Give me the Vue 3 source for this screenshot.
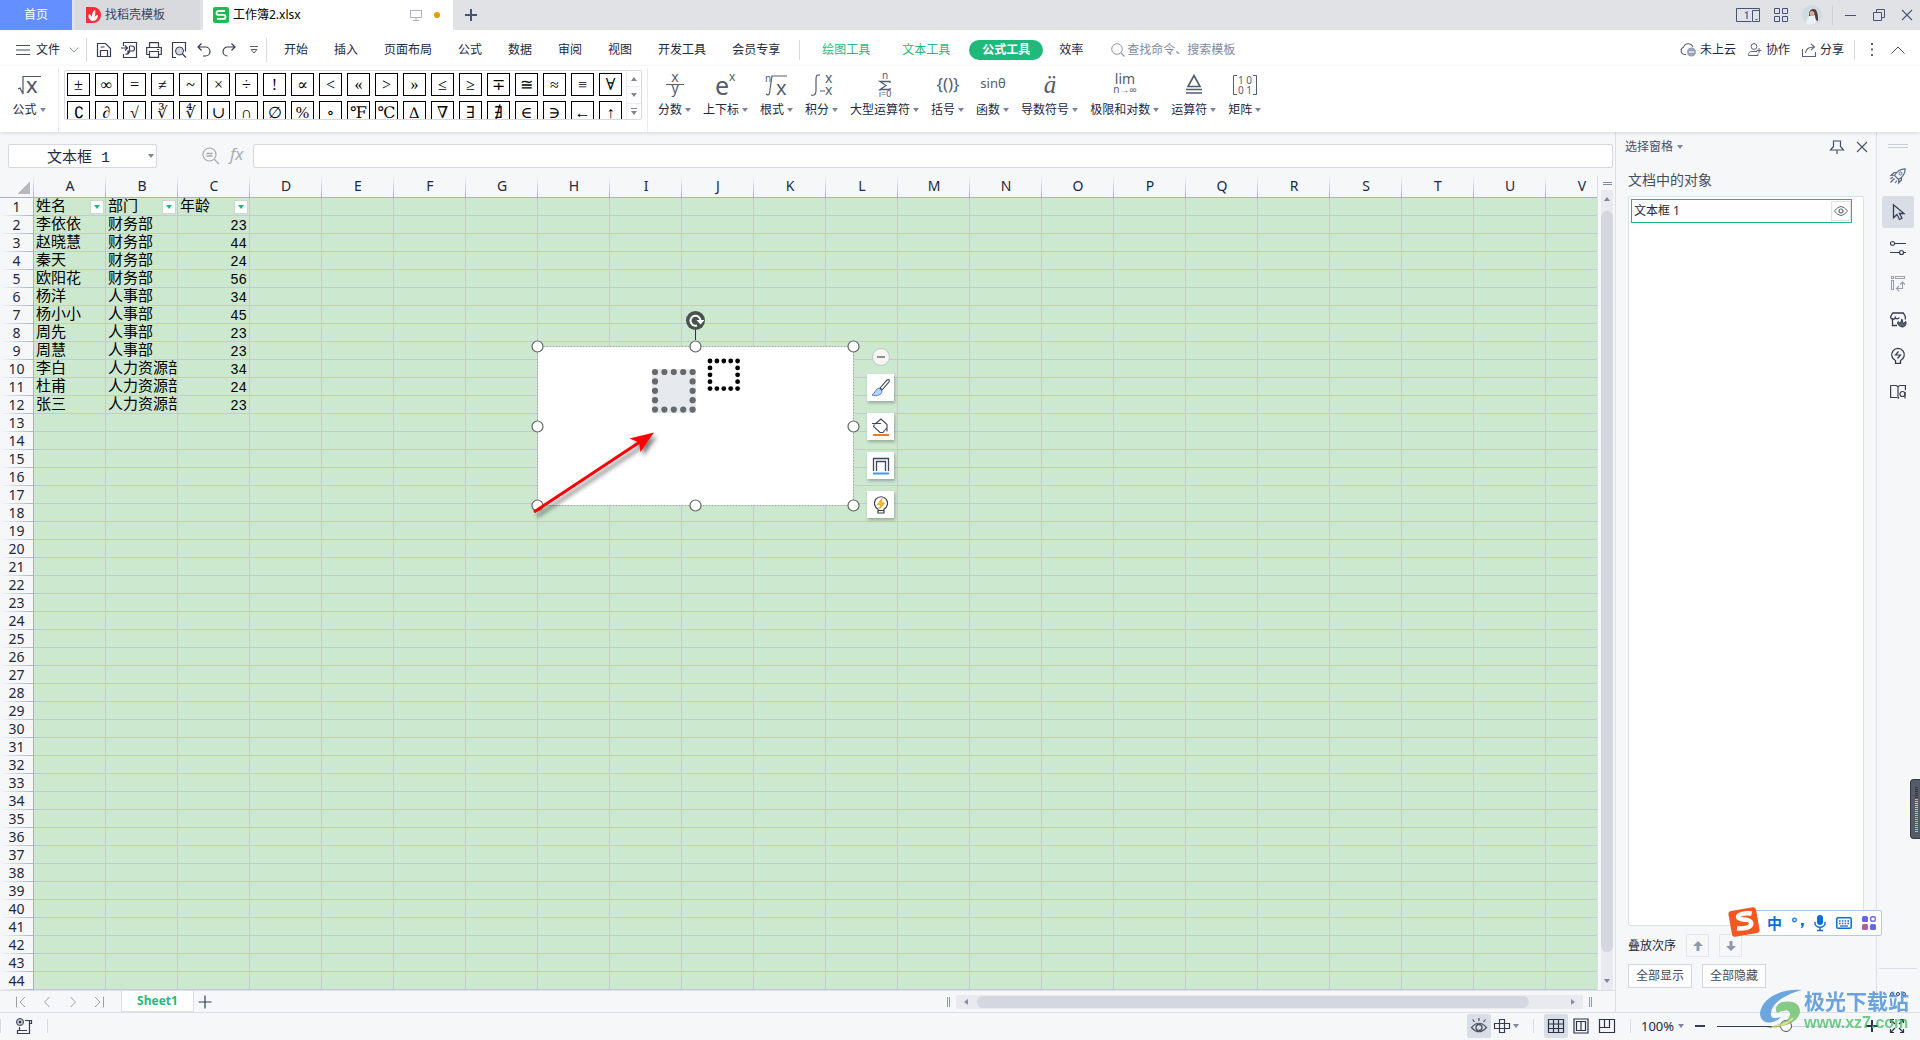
<script setup>
import { h, ref } from 'vue'

const icons = {
  docer: [16, 16, '<path d="M1 0h7a8 8 0 0 1 0 16H1z" fill="#fb2b3a"/><path d="M7 14C3 12 3 9 4 7c2 1 3 2 3 4 0-3 0-6 3-8 1 3 0 6-1 8 1-2 2-3 4-3 0 3-2 6-5 6z" fill="#fff"/>'],
  sheet: [16, 16, '<rect width="16" height="16" rx="2" fill="#1fba56"/><path d="M12 4H5.500a1.800 1.800 0 0 0 0 3.900h5a1.900 1.900 0 0 1 0 4H4" fill="none" stroke="#fff" stroke-width="1.800"/>'],
  monitor: [12, 12, '<path d="M.5 1.500h11v7H.5zM6 8.500v2.500M3 11.500h6" fill="none" stroke="#a9b0c6"/>'],
  plus: [12, 12, '<path d="M6 0v12M0 6h12" stroke="currentColor" stroke-width="2"/>'],
  device: [24, 14, '<path d="M15.500 13.500H.5V.5h23v2M16.500 2.500h7v11h-7zM19.500 11.500h2" fill="none" stroke="#465377"/><path d="M9 5l2-1v7" fill="none" stroke="#6b5f8a" stroke-width="1.300"/>'],
  apps: [14, 14, '<path d="M.5.5h5v5h-5zM8.500.5h5v5h-5zM.5 8.500h5v5h-5zM8.500 8.500h5v5h-5z" fill="none" stroke="#465377"/>'],
  avatar: [20, 20, '<circle cx="10" cy="10" r="10" fill="#cfdbe0"/><path d="M4 19c0-5 2-8 6-9l4 1 0 7c-3 2-7 2-10 1z" fill="#e8f1f4"/><path d="M7 8c1-4 5-5 7-3 2 3 2 7 2 11-2 0-3-3-3-6L7 11z" fill="#4a3a40"/><circle cx="10" cy="8.500" r="2.500" fill="#d9a79b"/>'],
  minimize: [12, 12, '<path d="M0 6.500h11" stroke="#465377"/>'],
  restore: [12, 12, '<path d="M.5 3.500h8v8h-8zM3.500 3.500v-3h8v8h-3" fill="none" stroke="#465377"/>'],
  close: [12, 12, '<path d="M1 1l10 10M11 1L1 11" stroke="currentColor" stroke-width="1.100"/>'],
  burger: [14, 12, '<path d="M0 1.500h14M0 6h14M0 10.500h14" stroke="#4a4f60"/>'],
  chevDown: [10, 6, '<path d="M.5.5L5 5 9.500.5" fill="none" stroke="#9a9fac"/>'],
  chevUp: [14, 8, '<path d="M.5 7.500L7 1l6.500 6.500" fill="none" stroke="#4a4f60"/>'],
  save: [16, 16, '<path d="M1.500 14.500v-13h8l5 5v8h-13zM4.500 14V8.500h7V14M4.500 5h4" fill="none" stroke="#363c52" stroke-width="1.200"/>'],
  pdf: [16, 16, '<path d="M2.500 4V.5h13v15h-13V12M0 6h6M4 3.500L6.500 6 4 8.500M8.500 4h2.500a2.500 2.500 0 0 1 0 5h-4v3.500M8.500 4v5a3 3 0 0 1-4 3" fill="none" stroke="#363c52" stroke-width="1.200"/>'],
  print: [16, 16, '<path d="M3.500 5V.7h9V5M3 12.500H.7V5.500h14.600v7H13M3.500 9.500h9v5.800h-9zM11 7.500h2" fill="none" stroke="#363c52" stroke-width="1.200"/>'],
  preview: [16, 16, '<path d="M5 15.500H1.500V.5h13v9" fill="none" stroke="#363c52" stroke-width="1.200"/><circle cx="8.500" cy="9" r="4" fill="#d5d8df" stroke="#363c52"/><path d="M11.500 12l3.500 3.500" stroke="#363c52" stroke-width="1.200"/>'],
  undo: [14, 14, '<path d="M4.500.5L1 4l3.500 3.500M1 4h7.500a4.500 4.500 0 0 1 0 9H6" fill="none" stroke="#363c52" stroke-width="1.200"/>'],
  redo: [14, 14, '<path d="M9.500.5L13 4 9.500 7.500M13 4H5.500a4.500 4.500 0 0 0 0 9" fill="none" stroke="#363c52" stroke-width="1.200"/>'],
  more: [8, 8, '<path d="M0 .5h8M1 3.500L4 7l3-3.500z" fill="none" stroke="#5a6174"/>'],
  search: [14, 14, '<circle cx="6" cy="6" r="5.300" fill="none" stroke="#8d95ad"/><path d="M10 10l3.500 3.500" stroke="#8d95ad" stroke-width="1.200"/>'],
  cloud: [16, 15, '<path d="M6 12.500H4.500a3.800 3.800 0 0 1-1-7.300 5 5 0 0 1 9.500 0" fill="none" stroke="#5c6378" stroke-width="1.100"/><circle cx="11.500" cy="10" r="4.500" fill="#98a1b6"/><path d="M9 10h5" stroke="#fff" stroke-width="1.200"/>'],
  collab: [14, 14, '<circle cx="6" cy="3.500" r="2.900" fill="none" stroke="#5c6378"/><path d="M9 8.500H4a3 3 0 0 0-3.500 3v1h9.500v-2M8.500 7.500h5M11 5v5" fill="none" stroke="#5c6378"/>'],
  share: [14, 14, '<path d="M.5 6v7.500h13V9M3.500 10c.5-4 3-6 8-6M9 .8L12.500 4 9 7.200" fill="none" stroke="#5c6378" stroke-width="1.100"/>'],
  dots: [2, 14, '<path d="M0 1h2M0 6.500h2M0 12h2" stroke="#5c6378" stroke-width="2"/>'],
  root: [24, 20, '<path d="M1 14l2-1 3 6V1.500h18" fill="none" stroke="#4d5467" stroke-width="1.200"/><text x="9" y="18" font-size="22" fill="#4d5467" font-family="Noto Sans">x</text>'],
  frac: [24, 24, '<text x="12" y="9" text-anchor="middle" font-size="14">x</text><text x="12" y="20" text-anchor="middle" font-size="14">y</text><path d="M3 11.500h18" stroke="#535c70"/>'],
  sup: [24, 24, '<text x="1" y="22" font-size="25">e</text><text x="15" y="8" font-size="12">x</text>'],
  nroot: [24, 24, '<text x="0" y="9" font-size="10">n</text><path d="M1 21c3 2 4 0 4-5L7 3h15" fill="none" stroke="#535c70" stroke-width="1.200"/><text x="11" y="22" font-size="20">x</text>'],
  integral: [24, 24, '<path d="M10 2c-4-1-4 2-4 5v10c0 4-1 6-5 5M10 18h5" fill="none" stroke="#535c70" stroke-width="1.200"/><text x="15" y="10" font-size="14">x</text><text x="15" y="22" font-size="14">x</text>'],
  sum: [24, 24, '<text x="12" y="6" font-size="10" text-anchor="middle">n</text><path d="M17 10V8.500H7l6 4-6 4h10V15" fill="none" stroke="#535c70" stroke-width="1.300"/><text x="12" y="24" font-size="9" text-anchor="middle">i=0</text>'],
  brackets: [26, 24, '<text x="13" y="17" font-size="17" text-anchor="middle">{()}</text>'],
  func: [26, 24, '<text x="13" y="15" font-size="13" text-anchor="middle">sinθ</text>'],
  deriv: [24, 24, '<text x="12" y="20" font-size="25" font-style="italic" text-anchor="middle" style="font-family:Liberation Serif">ä</text>'],
  limit: [26, 24, '<text x="13" y="11" font-size="14" text-anchor="middle">lim</text><text x="13" y="20" font-size="10" text-anchor="middle">n→∞</text>'],
  operator: [24, 24, '<path d="M12 2.500l6 11H6zM4 16.500h16M4 20h16" fill="none" stroke="#535c70" stroke-width="1.600"/>'],
  matrix: [24, 24, '<path d="M4 2.500H.5v19H4M20 2.500h3.500v19H20" fill="none" stroke="#535c70"/><text x="12" y="11" font-size="10" text-anchor="middle">1 0</text><text x="12" y="21" font-size="10" text-anchor="middle">0 1</text>'],
  zoomOut: [18, 18, '<circle cx="7.500" cy="7.500" r="6.500" fill="none" stroke="#a9a9ae" stroke-width="1.200"/><path d="M4.500 6.500h6M4.500 9h6M12.500 12.500L17 17" stroke="#a9a9ae" stroke-width="1.300"/>'],
  fx: [18, 18, '<text x="2" y="13" font-size="17" font-style="italic" fill="#a9a9ae" font-family="Open Sans">fx</text>'],
  pin: [14, 14, '<path d="M3.500 1h7v5.500l3 3.500H.5l3-3.500zM7 10v4" fill="none" stroke="#454f6b" stroke-width="1.200"/>'],
  eye: [14, 10, '<path d="M.5 5Q7-4 13.500 5 7 14 .5 5z" fill="none" stroke="#63666d"/><circle cx="7" cy="5" r="2" fill="none" stroke="#63666d" stroke-width="1.200"/>'],
  rocket: [16, 16, '<path d="M4.500 7.500C7 3 10 .8 15.200.8 15.200 6 13 9 8.500 11.500zM5 7L1 7.500 4 4.500h3M9 11l-.5 4 3-3V9M4.500 10.500l-4 4M3 9L.5 11M7 12.500L5 15" fill="none" stroke="#5b6885" stroke-width="1.200"/><circle cx="10.500" cy="5.500" r="1.500" fill="none" stroke="#5b6885"/>'],
  pointer: [16, 16, '<path d="M3.500.8v13l3.500-3.300 2.500 5 2.500-1.200-2.500-4.800H14z" fill="none" stroke="#363c52" stroke-width="1.300"/>'],
  sliders: [16, 16, '<circle cx="2.500" cy="3.500" r="2" fill="none" stroke="#363c52" stroke-width="1.200"/><circle cx="11.500" cy="12.500" r="2" fill="none" stroke="#363c52" stroke-width="1.200"/><path d="M5 3.500h11M0 12.500h9.500M13.500 12.500H16" stroke="#363c52" stroke-width="1.200"/>'],
  transpose: [16, 16, '<path d="M1.500.5h2v2h-2zM5.500.5h9v2h-9zM1.500 4.500h2v9h-2zM7 12.500h5.500V6M10 8.500l2.500-2.500L15 8.500M9 10l-2.500 2.500L9 15" fill="none" stroke="#9aa0b0" stroke-width="1.100"/>'],
  store: [16, 16, '<path d="M2.500 6v7.500H7M.7 4.500l2-3.500h10.600l2 3.500v3M.7 4.500a2.200 2.200 0 0 0 4.600 1 2.200 2.200 0 0 0 4 0" fill="none" stroke="#363c52" stroke-width="1.300"/><path d="M12 15C8 14 7 11.500 8 9.500l2.500 2 1.300-4.500 1.500 4.500 2.500-2c1 3-.8 5.500-3.800 5.500z" fill="#5c6272" stroke="#363c52"/>'],
  bulb: [16, 16, '<path d="M5.500 12.500a6.300 6.300 0 1 1 5 0v2.800h-5z" fill="none" stroke="#363c52" stroke-width="1.300"/><path d="M8.500 3.500l-3 3.500h5l-3 3.500" fill="none" stroke="#363c52" stroke-width="1.200"/>'],
  book: [16, 16, '<path d="M.6 1.500H6l2 1 2-1h5.400V6M8 2.500v12M7 13.500H.6v-12M8 14.500l1-1" fill="none" stroke="#363c52" stroke-width="1.200"/><circle cx="12.500" cy="10" r="2.500" fill="none" stroke="#363c52" stroke-width="1.200"/><path d="M15 8v6.500" stroke="#363c52" stroke-width="1.200"/>'],
  ellipsis: [16, 4, '<g fill="none" stroke="#363c52"><circle cx="2" cy="2" r="1.500"/><circle cx="8" cy="2" r="1.500"/><circle cx="14" cy="2" r="1.500"/></g>'],
  up: [10, 10, '<path d="M5 0l5 5H6.500v5h-3V5H0z" fill="#8e98ac"/>'],
  down: [10, 10, '<path d="M5 10L0 5h3.500V0h3v5H10z" fill="#8e98ac"/>'],
  first: [10, 12, '<path d="M.5.500v11M9 1L4 6l5 5" fill="none" stroke="#9b9fa8"/>'],
  prev: [10, 12, '<path d="M7.500 1l-5 5 5 5" fill="none" stroke="#9b9fa8"/>'],
  next: [10, 12, '<path d="M2.500 1l5 5-5 5" fill="none" stroke="#9b9fa8"/>'],
  last: [10, 12, '<path d="M9.500.500v11M1 1l5 5-5 5" fill="none" stroke="#9b9fa8"/>'],
  thinPlus: [14, 14, '<path d="M7 .500v13M.5 7h13" stroke="#363c52" stroke-width="1.200"/>'],
  macro: [16, 16, '<circle cx="4" cy="4" r="3.500" fill="#c5c8cc" stroke="#363c52"/><circle cx="4" cy="4" r="1.300" fill="#363c52"/><path d="M9 2.500h6.500v3h-2v10h-12v-3H11M3.500 9v3.500M13.500 3v3" fill="none" stroke="#363c52" stroke-width="1.200"/>'],
  eyeCare: [16, 16, '<path d="M.5 9.500Q8 1 15.500 9.500 8 18 .5 9.500zM8 0v3M1.500 1.500l2 2.500M14.500 1.500l-2 2.500" fill="none" stroke="#4b5160" stroke-width="1.200"/><circle cx="8" cy="9.500" r="3" fill="none" stroke="#4b5160" stroke-width="1.300"/>'],
  cross: [16, 16, '<path d="M5.500 1.500h5v13h-5zM.5 5.500h15v5H.5z" fill="none" stroke="#363c52" stroke-width="1.200"/>'],
  gridView: [16, 14, '<path d="M.5.500h15v13H.5zM.5 5h15M.5 9.500h15M5.500.500v13M10.500.500v13" fill="none" stroke="#2c3248" stroke-width="1.200"/>'],
  pageView: [16, 16, '<path d="M1 1h14v14H1zM3.500 3.500h9v9h-9zM8 3.500v9" fill="none" stroke="#2c3248" stroke-width="1.200"/>'],
  breakView: [16, 14, '<path d="M.5.500h15v13H.5zM.5 8.500h10V.5M5.500.500v8" fill="none" stroke="#2c3248" stroke-width="1.200"/>'],
  full: [14, 14, '<path d="M.5 4V.5H4M10 .5h3.500V4M13.500 10v3.500H10M4 13.500H.5V10M.5.500L5 5M13.500.500L9 5M13.500 13.500L9 9M.5 13.500L5 9" fill="none" stroke="#2c3248" stroke-width="1.200"/>'],
  brush: [18, 18, '<path d="M8 9l7-8c2-1 3 0 2 2l-7 8z" fill="#f2f3f6" stroke="#3f4350" stroke-width="1.100"/><path d="M0 16c3-1 3-6 7-7l3 3c0 4-5 5.500-10 4z" fill="#b9d3fb" stroke="#4c82e6"/>'],
  fill: [18, 18, '<path d="M3 6L9 1l6 5.500v7M0 5.500h9M2.500 6.500L1.500 8.500l6.500 6h3l4-5" fill="none" stroke="#3f4660" stroke-width="1.100"/><path d="M1 17h16" stroke="#f07a24" stroke-width="2"/>'],
  outline: [18, 18, '<path d="M1.500 14V1.500h15V14M4.500 14V4.500h9V14" fill="none" stroke="#3f4660" stroke-width="1.300"/><path d="M1 16.500h16" stroke="#4d97d8" stroke-width="2"/>'],
  idea: [18, 18, '<path d="M6 13a6.500 6.500 0 1 1 6 0v1.500H6zM6 14.500V17h6v-2.500" fill="#fff" stroke="#3c3f47" stroke-width="1.200"/><path d="M10 2.500L5.500 8.500h3L7.500 13 12.500 7h-3z" fill="#fdc21c" stroke="#e89a10" stroke-width=".8"/>'],
  sogou: [32, 32, '<g transform="rotate(-10 16 16)"><rect x="2" y="3" width="28" height="26" rx="3" fill="#f4571f"/><path d="M25 9c-6-2-14-2-14 1.500C11 14 23 13 23 18c0 5-8 5-15 3" fill="none" stroke="#fff" stroke-width="4.500"/></g>'],
  punct: [12, 12, '<circle cx="2.500" cy="3" r="1.800" fill="none" stroke="#0a6fd8" stroke-width="1.300"/><path d="M9 6h3c0 3-1 4.500-3 5.500v-1l1-2H9z" fill="#0a6fd8"/>'],
  mic: [12, 16, '<rect x="3" y="0" width="6" height="10" rx="3" fill="#0a6fd8"/><path d="M.8 7c0 7 10.400 7 10.400 0M6 12v3M3 15.500h6" fill="none" stroke="#0a6fd8" stroke-width="1.500"/>'],
  keyboard: [16, 12, '<rect x=".8" y=".8" width="14.400" height="10.400" rx="1" fill="none" stroke="#0a6fd8" stroke-width="1.500"/><path d="M3 4h10M3 6.500h10" stroke="#0a6fd8" stroke-width="1.500" stroke-dasharray="1.600 1.200"/><path d="M4 9h8" stroke="#0a6fd8" stroke-width="1.300"/>'],
  tiles: [14, 14, '<rect width="6" height="6" rx="1.500" fill="#6a63ee"/><rect x="8.700" y=".700" width="4.600" height="4.600" rx="1.500" fill="none" stroke="#6a63ee" stroke-width="1.400"/><rect y="8" width="6" height="6" rx="1.500" fill="#b35f9b"/><rect x="8" y="8" width="6" height="6" rx="1.500" fill="#5f6af2"/>'],
  brand: [42, 40, '<path d="M0 24C2 10 20-1 42 1 24 6 12 14 11 24c-1 6 5 6 10 4C14 36 0 36 0 24z" fill="#4a93d9"/><path d="M22 13c10-2 18 1 18 9 0 9-12 17-34 17 14-3 24-8 24-14 0-5-7-4-13-1-3-5 0-9 5-11z" fill="#6cc06c"/><path d="M12 38c9-1 16-4 21-9" stroke="#e2d46b" stroke-width="2" fill="none"/>'],
}
const Icon = (p) => {
  const [w, ht, body] = icons[p.name]
  return h('svg', { width: w, height: ht, viewBox: `0 0 ${w} ${ht}`, class: 'icon', 'aria-hidden': 'true', innerHTML: body })
}
Icon.props = ['name']

const quick = [['save', '保存'], ['pdf', '输出为PDF'], ['print', '打印'], ['preview', '打印预览'], ['undo', '撤销'], ['redo', '恢复']]
const menus = ['开始', '插入', '页面布局', '公式', '数据', '审阅', '视图', '开发工具', '会员专享']
const symbols = [...'±∞=≠~×÷!∝<«>»≤≥∓≅≈≡∀∁∂√∛∜∪∩∅%∘℉℃∆∇∃∄∈∋←↑']
const tools = [
  ['frac', '分数'], ['sup', '上下标'], ['nroot', '根式'], ['integral', '积分'], ['sum', '大型运算符'], ['brackets', '括号'],
  ['func', '函数'], ['deriv', '导数符号'], ['limit', '极限和对数'], ['operator', '运算符'], ['matrix', '矩阵'],
]
const columns = [...'ABCDEFGHIJKLMNOPQRSTUV']
const people = [
  ['姓名', '部门', '年龄'], ['李依依', '财务部', 23], ['赵晓慧', '财务部', 44], ['秦天', '财务部', 24], ['欧阳花', '财务部', 56],
  ['杨洋', '人事部', 34], ['杨小小', '人事部', 45], ['周先', '人事部', 23], ['周慧', '人事部', 23],
  ['李白', '人力资源部', 34], ['杜甫', '人力资源部', 24], ['张三', '人力资源部', 23],
]
const rowCount = 44
const cell = (r, c) => people[r - 1]?.[c] ?? ''
const handles = [[8, 38], [166, 38], [324, 38], [8, 118], [324, 118], [8, 197], [166, 197], [324, 197]]
const ring = (x, y, step) => {
  const out = []
  for (let i = 0; i < 5; i++) for (let j = 0; j < 5; j++) if (i % 4 === 0 || j % 4 === 0) out.push([x + i * step, y + j * step])
  return out
}
const greyDots = ring(126, 64, 9.4)
const blackDots = ring(181, 53, 6.9)
const side = ['rocket', 'pointer', 'sliders', 'transpose', 'store', 'bulb', 'book']
const meter = Array.from({ length: 23 }, (_, i) => (i < 6 ? '#30343d' : `hsl(${40 + (i - 6) * 8} 60% 65%)`))
const zoom = ref(50)
</script>

<template>
  <div class="app">
    <header class="titlebar">
      <button class="tab home">首页</button>
      <button class="tab docer"><Icon name="docer" /><span>找稻壳模板</span></button>
      <button class="tab current"><Icon name="sheet" /><span>工作簿2.xlsx</span><Icon name="monitor" class="mon" /><i class="dirty"></i></button>
      <button class="newtab" aria-label="新建"><Icon name="plus" /></button>
      <div class="window">
        <button aria-label="设备"><Icon name="device" /></button>
        <button aria-label="应用"><Icon name="apps" /></button>
        <button aria-label="账号"><Icon name="avatar" /></button>
        <i class="rule"></i>
        <button aria-label="最小化"><Icon name="minimize" /></button>
        <button aria-label="还原"><Icon name="restore" /></button>
        <button aria-label="关闭"><Icon name="close" /></button>
      </div>
    </header>

    <nav class="menubar">
      <button class="file"><Icon name="burger" /><span>文件</span><Icon name="chevDown" /></button>
      <i class="rule tall"></i>
      <div class="quick">
        <button v-for="q in quick" :key="q[0]" :aria-label="q[1]"><Icon :name="q[0]" /></button>
        <button aria-label="更多"><Icon name="more" /></button>
      </div>
      <i class="rule tall"></i>
      <div class="menus"><button v-for="m in menus" :key="m" class="menu">{{ m }}</button></div>
      <i class="rule"></i>
      <div class="menus tabs">
        <button class="menu context">绘图工具</button>
        <button class="menu context">文本工具</button>
        <button class="pill">公式工具</button>
        <button class="menu">效率</button>
      </div>
      <label class="find"><Icon name="search" /><input placeholder="查找命令、搜索模板" aria-label="查找命令、搜索模板" /></label>
      <div class="account">
        <button><Icon name="cloud" />未上云</button>
        <button><Icon name="collab" />协作</button>
        <button><Icon name="share" />分享</button>
        <i class="rule"></i>
        <button class="dots" aria-label="更多"><Icon name="dots" /></button>
        <button aria-label="收起功能区"><Icon name="chevUp" /></button>
      </div>
    </nav>

    <section class="ribbon">
      <button class="equation"><Icon name="root" /><span class="lbl">公式<i class="caret"></i></span></button>
      <div class="gallery">
        <div class="symbols">
          <button v-for="s in symbols" :key="s">{{ s }}</button>
        </div>
        <div class="gscroll">
          <button aria-label="上一行"><i class="caret flip"></i></button>
          <button aria-label="下一行"><i class="caret"></i></button>
          <button aria-label="展开" class="expand"><i class="caret"></i></button>
        </div>
      </div>
      <div class="tools">
        <button v-for="t in tools" :key="t[0]"><Icon :name="t[0]" /><span class="lbl">{{ t[1] }}<i class="caret"></i></span></button>
      </div>
    </section>

    <div class="body">
      <main class="book">
        <div class="formula">
          <label class="namebox"><input value="文本框 1" aria-label="名称框" /><i class="caret"></i></label>
          <div class="fxicons"><Icon name="zoomOut" /><Icon name="fx" /></div>
          <input class="fxinput" aria-label="编辑栏" />
        </div>

        <div class="area">
          <div class="sheetwrap">
            <table class="sheet">
              <colgroup><col class="rowcol" /><col v-for="c in columns" :key="c" class="datacol" /></colgroup>
              <thead>
                <tr><th class="corner"><i></i></th><th v-for="c in columns" :key="c">{{ c }}</th></tr>
              </thead>
              <tbody>
                <tr v-for="r in rowCount" :key="r">
                  <th>{{ r }}</th>
                  <td v-for="(c, i) in columns" :key="c" :class="{ num: i === 2 && r > 1 }">{{ cell(r, i) }}<button v-if="r === 1 && i < 3" class="filter" aria-label="筛选"><i class="caret"></i></button></td>
                </tr>
              </tbody>
            </table>

            <svg class="shape" width="340" height="220" viewBox="0 0 340 220">
              <defs>
                <filter id="soft" x="-20%" y="-20%" width="150%" height="150%"><feDropShadow dx="3" dy="4" stdDeviation="2" flood-color="#000" flood-opacity=".5" /></filter>
              </defs>
              <rect x="8.500" y="38.500" width="316" height="159" fill="#fff" stroke="#a2a8a3" stroke-dasharray="2 1" />
              <path d="M166.500 20v12" stroke="#333" />
              <circle cx="166.500" cy="12.500" r="9.500" fill="#48534a" />
              <path d="M168 17.500a5 5 0 1 1 3.500-5" fill="none" stroke="#fff" stroke-width="2" />
              <path d="M167.500 12h8l-4 4.500z" fill="#fff" />
              <rect x="123" y="61" width="44" height="44" fill="#e6eaee" />
              <circle v-for="(d, i) in greyDots" :key="'g' + i" :cx="d[0]" :cy="d[1]" r="3.100" fill="#666a6d" />
              <circle v-for="(d, i) in blackDots" :key="'b' + i" :cx="d[0]" :cy="d[1]" r="2.400" fill="#000" />
              <circle v-for="(p, i) in handles" :key="'h' + i" :cx="p[0] + 0.5" :cy="p[1] + 0.5" r="5.500" fill="#fff" stroke="#5f6661" stroke-width="1.200" />
              <g filter="url(#soft)"><path d="M5 204L110 134.500" stroke="#fe0000" stroke-width="3" /><path d="M125 124.500l-13.500 19.500-1.500-9.500-9.500-4z" fill="#fe0000" /></g>
            </svg>
            <div class="floatbar">
              <button class="fold" aria-label="收起"></button>
              <button v-for="n in ['brush', 'fill', 'outline', 'idea']" :key="n" class="tool" :aria-label="n"><Icon :name="n" /></button>
            </div>
          </div>
          <div class="vscroll">
            <i class="split"></i>
            <div class="track"><i class="caret flip"></i><i class="thumb"></i><i class="caret"></i></div>
          </div>
        </div>

        <div class="sheettabs">
          <div class="nav">
            <button v-for="n in ['first', 'prev', 'next', 'last']" :key="n" :aria-label="n"><Icon :name="n" /></button>
          </div>
          <button class="sheettab">Sheet1</button>
          <button class="add" aria-label="新建工作表"><Icon name="thinPlus" /></button>
          <div class="hscroll">
            <i class="grip"></i>
            <div class="htrack"><i class="left"></i><i class="hthumb"></i><i class="right"></i></div>
            <i class="grip"></i>
          </div>
        </div>
      </main>

      <aside class="pane">
        <div class="panehead">
          <button class="panetitle">选择窗格<i class="caret"></i></button>
          <button aria-label="固定"><Icon name="pin" /></button>
          <button aria-label="关闭"><Icon name="close" /></button>
        </div>
        <h2>文档中的对象</h2>
        <div class="objects">
          <div class="object"><span>文本框 1</span><button aria-label="显示"><Icon name="eye" /></button></div>
        </div>
        <div class="order">
          <span>叠放次序</span>
          <button aria-label="上移"><Icon name="up" /></button>
          <button aria-label="下移"><Icon name="down" /></button>
        </div>
        <div class="showhide"><button>全部显示</button><button>全部隐藏</button></div>
      </aside>

      <aside class="rail">
        <i class="drag"></i>
        <button v-for="s in side" :key="s" :class="{ on: s === 'pointer' }" :aria-label="s"><Icon :name="s" /></button>
        <div class="railend"><Icon name="ellipsis" /></div>
      </aside>
    </div>

    <footer class="status">
      <i class="rule"></i>
      <button class="macro" aria-label="录制宏"><Icon name="macro" /></button>
      <i class="rule"></i>
      <div class="views">
        <button class="on" aria-label="护眼模式"><Icon name="eyeCare" /></button>
        <button class="cross" aria-label="阅读模式"><Icon name="cross" /><i class="caret"></i></button>
        <i class="rule"></i>
        <div class="modes">
          <button class="on" aria-label="普通视图"><Icon name="gridView" /></button>
          <button aria-label="页面布局"><Icon name="pageView" /></button>
          <button aria-label="分页预览"><Icon name="breakView" /></button>
        </div>
        <i class="rule"></i>
        <button class="pct">100%<i class="caret"></i></button>
        <button class="minus" aria-label="缩小"></button>
        <input v-model="zoom" type="range" min="0" max="100" aria-label="缩放" />
        <button class="zin" aria-label="放大"><Icon name="plus" /></button>
        <button class="fullscreen" aria-label="全屏"><Icon name="full" /></button>
      </div>
    </footer>

    <div class="ime">
      <Icon name="sogou" class="slogo" />
      <b>中</b><Icon name="punct" /><Icon name="mic" /><Icon name="keyboard" /><Icon name="tiles" />
    </div>
    <div class="meter"><i v-for="(m, i) in meter" :key="i" :style="{ background: m }"></i></div>
    <div class="brand">
      <Icon name="brand" />
      <div><strong>极光下载站</strong><span>www.xz7.com</span></div>
    </div>
  </div>
</template>

<style>
body { margin: 0; }
</style>

<style scoped>
.app { position: relative; min-height: 100vh; display: flex; flex-direction: column; overflow: hidden; background: #f5f7f9; color: #23283c; font: 12px/16px "Noto Sans", "Noto Sans CJK SC", sans-serif; }
.app * { box-sizing: border-box; }
button { margin: 0; padding: 0; border: 0; background: none; color: inherit; font: inherit; display: flex; align-items: center; justify-content: center; white-space: nowrap; }
input { border: 0; padding: 0; margin: 0; background: none; color: inherit; font: inherit; outline: 0; min-width: 0; }
.icon, .app :deep(.icon) { display: block; flex: none; overflow: visible; }
.rule { flex: none; width: 1px; height: 20px; background: #d9dbe1; }
.caret { flex: none; width: 0; height: 0; border: 3px solid transparent; border-top: 4px solid #7c859b; border-bottom: 0; }
.caret.flip { transform: rotate(180deg); }

.titlebar { display: flex; height: 30px; background: #e1e2e6; }
.home { width: 72px; background: #638fff; color: #fff; }
.docer { width: 125px; margin: 0 3px; padding-left: 10px; gap: 4px; justify-content: flex-start; background: #d9dade; color: #3d455c; }
.current { width: 250px; padding-left: 10px; padding-right: 13px; gap: 4px; justify-content: flex-start; background: #fff; color: #000; }
.mon { margin-left: auto; }
.dirty { width: 6px; height: 6px; margin-left: 8px; border-radius: 50%; background: #e69b00; }
.newtab { width: 36px; color: #465377; }
.window { margin-left: auto; padding-right: 7px; display: flex; align-items: center; gap: 14px; color: #465377; }
.window .rule { margin: 0 -2px 0 -4px; background: #cccfd6; }
.window button:nth-of-type(n + 5) { margin-left: 2px; }

.menubar { display: flex; align-items: center; height: 36px; padding-top: 3px; background: #fff; }
.file { width: 86px; padding-left: 16px; gap: 6px; justify-content: flex-start; }
.file span { margin-right: 3px; }
.tall { height: 24px; }
.quick { display: flex; padding-left: 4px; }
.quick button { width: 25px; height: 24px; }
.menus { display: flex; padding: 0 6px 0 4px; }
.tabs { padding: 0 0 0 6px; }
.menu { padding: 0 13px; height: 20px; }
.context { padding: 0 16px; color: #1fb97c; }
.pill { height: 20px; margin: 0 3px; padding: 0 13px; border-radius: 10px; background: #1fb97c; color: #fff; font-weight: 700; }
.find { display: flex; align-items: center; gap: 2px; margin-left: 15px; }
.find input { width: 120px; }
.find input::placeholder { color: #8189a0; opacity: 1; }
.account { display: flex; align-items: center; gap: 12px; margin-left: auto; padding-right: 15px; }
.account button { gap: 4px; }
.account .rule { margin: 0 -2px; }
.dots { width: 14px; }

.ribbon { position: relative; z-index: 1; display: flex; height: 66px; background: #fff; box-shadow: 0 1px 4px #0002; }
.equation { flex-direction: column; width: 59px; margin-top: 2px; padding: 7px 0 0; justify-content: flex-start; gap: 7px; border-right: 1px solid #ebecf0; }
.lbl { display: flex; align-items: center; gap: 3px; }
.gallery { display: flex; width: 578px; height: 50px; margin: 4px 5px 0; border: 1px solid #d8dae0; border-radius: 2px; overflow: hidden; }
.symbols { display: grid; grid-template-columns: repeat(20, 23px); grid-auto-rows: 23px; gap: 5px; padding: 2px; align-content: start; width: 561px; height: 48px; overflow: hidden; }
.symbols button { border: 1px solid #000; color: #000; font: 16px/20px "Liberation Serif", "DejaVu Serif", serif; }
.gscroll { flex: 1; display: flex; flex-direction: column; border-left: 1px solid #ebecf0; }
.gscroll button { flex: 1; border-top: 1px solid #ebecf0; flex-direction: column; }
.gscroll button:first-child { border-top: 0; }
.expand::before { content: ""; width: 6px; height: 1px; margin-bottom: 2px; background: #7c859b; }
.tools { display: flex; margin-top: 2px; padding-left: 4px; border-left: 1px solid #ebecf0; }
.tools button { flex-direction: column; justify-content: flex-start; gap: 5px; padding: 5px 6px 0; }
.tools :deep(text) { fill: #535c70; font-family: "Noto Sans", sans-serif; }

.body { flex: 1; display: flex; }
.book { flex: 1; min-width: 0; display: flex; flex-direction: column; }
.formula { display: flex; align-items: center; height: 44px; padding: 3px 2px 0 8px; }
.namebox { display: flex; align-items: center; width: 149px; height: 24px; padding-right: 2px; border: 1px solid #d5d8df; border-radius: 2px; background: #fff; }
.namebox input { flex: 1; text-align: center; font: 15px "Liberation Mono", "Noto Sans CJK SC", monospace; }
.fxicons { display: flex; gap: 8px; padding: 0 7px 0 45px; }
.fxinput { flex: 1; height: 24px; border: 1px solid #d5d8df; border-radius: 2px; background: #fff; }

.area { display: flex; }
.sheetwrap { position: relative; flex: 1; min-width: 0; overflow: hidden; }
.sheet { width: 1618px; table-layout: fixed; border-collapse: separate; border-spacing: 0; background: #cce8cf; }
.rowcol { width: 34px; }
.datacol { width: 72px; }
.sheet th { height: 18px; padding: 0; border: 0; font: 14px/16px "Noto Sans", sans-serif; color: #23283c; text-align: center; background: linear-gradient(90deg, #f5f7f9, #abb0c8) bottom / 100% 1px no-repeat, #f5f7f9; border-right: 1px solid #abb0c8; }
.sheet thead th { height: 22px; padding-bottom: 2px; border-right: 0; border-bottom: 1px solid #abb0c8; background: linear-gradient(#f5f7f9, #abb0c8) right / 1px 100% no-repeat, #f5f7f9; }
.corner i { display: block; width: 12px; height: 12px; margin: 4px 4px 0 auto; background: linear-gradient(135deg, transparent 50%, #b6b8bd 50%); }
.sheet td { position: relative; height: 18px; padding: 3px 2px 0; border-right: 1px solid #c3c9d6; border-bottom: 1px solid #c3c9d6; color: #000; font: 15px/14px "Liberation Mono", "Noto Sans CJK SC", monospace; white-space: nowrap; overflow: hidden; }
.sheet td.num { text-align: right; font-size: 14px; }
.filter { position: absolute; right: 1px; top: 2px; width: 14px; height: 14px; border: 1px solid #cfd3dc; background: #fff; }
.filter .caret { border-top-color: #1fb97c; }
.shape { position: absolute; left: 529px; top: 132px; }
.floatbar { position: absolute; left: 867px; top: 172px; display: flex; flex-direction: column; gap: 12px; align-items: center; }
.fold { width: 18px; height: 18px; margin-bottom: -4px; border: 1px solid #c0c6c1; border-radius: 50%; background: #f4f6f4; }
.fold::before { content: ""; width: 8px; height: 2px; background: #8e938f; }
.tool { width: 27px; height: 27px; background: #fff; box-shadow: 1px 2px 3px #0004; }

.vscroll { display: flex; flex-direction: column; width: 18px; padding: 0 2px 0 3px; border-left: 1px solid #dcdfe6; }
.split { height: 3px; margin: 6px 1px 5px 2px; border: solid #7f8aa5; border-width: 1px 0; }
.track { flex: 1; display: flex; flex-direction: column; align-items: center; justify-content: space-between; padding: 7px 0; background: #e8eaf0; }
.thumb { width: 12px; flex: 1; margin: 10px 0 27px; border-radius: 6px; background: #d4d7e0; }
.sheettabs { display: flex; align-items: stretch; height: 22px; border-top: 1px solid #dcdfe6; }
.nav { display: flex; align-items: center; gap: 16px; padding: 0 17px 0 16px; }
.sheettab { width: 73px; border: solid #dcdfe6; border-width: 0 1px 1px; background: #fff; color: #1fb97c; font-weight: 700; }
.add { width: 22px; }
.hscroll { display: flex; align-items: center; gap: 6px; width: 645px; margin-left: auto; margin-right: 23px; }
.grip { width: 3px; height: 10px; border: solid #8f99af; border-width: 0 1px; }
.htrack { flex: 1; display: flex; align-items: center; height: 14px; padding: 0 8px; background: #e8eaf0; }
.hthumb { flex: 1; height: 12px; margin: 0 42px 0 9px; border-radius: 6px; background: #d4d7e0; }
.left, .right { border: 3px solid transparent; border-right: 4px solid #8390ad; border-left: 0; }
.right { border-right: 0; border-left: 4px solid #8390ad; }

.pane { flex: none; display: flex; flex-direction: column; width: 261px; padding: 7px 12px 24px; border-left: 1px solid #dcdfe6; color: #454c60; }
.panehead { display: flex; align-items: center; height: 16px; gap: 12px; margin: 0 -4px 0 -3px; color: #454f6b; }
.panetitle { gap: 4px; margin-right: auto; }
h2 { margin: 14px 0 5px; font: 14px/22px "Noto Sans", "Noto Sans CJK SC", sans-serif; }
.objects { flex: 1; padding: 2px 11px 0 2px; border: 1px solid #dcdfe6; border-radius: 2px; background: #fff; }
.object { display: flex; align-items: center; height: 24px; padding-left: 2px; border: 1px solid #1fb97c; color: #23283c; }
.object button { width: 20px; height: 20px; margin-left: auto; border: 1px solid #e0e2e8; }
.order { display: flex; align-items: center; gap: 10px; padding-top: 8px; color: #23283c; }
.order button { width: 23px; height: 23px; border: 1px solid #e3e6ec; }
.showhide { display: flex; gap: 10px; padding-top: 7px; }
.showhide button { width: 64px; height: 24px; border: 1px solid #d3d6de; background: #fff; }
.rail { flex: none; display: flex; flex-direction: column; align-items: center; width: 44px; padding: 12px 2px 0 0; border-left: 1px solid #dcdfe6; }
.drag { width: 20px; height: 4px; margin-bottom: 12px; border: solid #c9cdd6; border-width: 1px 0; }
.rail button { width: 32px; height: 32px; margin-bottom: 4px; border-radius: 2px; }
.rail .on, .status .on { background: #d8dde6; }
.railend { width: 38px; margin-top: auto; height: 44px; display: flex; justify-content: center; padding-top: 23px; border-top: 1px solid #dcdfe6; }

.status { display: flex; align-items: center; height: 28px; padding-bottom: 1px; border-top: 1px solid #dcdfe6; }
.status .rule { height: 14px; }
.macro { width: 46px; }
.views { display: flex; align-items: center; margin-left: auto; padding-right: 16px; }
.views .on { width: 24px; height: 24px; border-radius: 2px; }
.cross { gap: 3px; margin: 0 14px 0 3px; }
.modes { display: flex; margin: 0 10px; }
.modes button { width: 26px; height: 24px; }
.pct { width: 43px; margin-left: 10px; gap: 4px; justify-content: flex-start; font-size: 13px; }
.minus { width: 10px; height: 2px; margin: 0 12px 0 11px; background: #363c52; }
.zin { margin: 0 12px 0 11px; color: #2c3248; }
.views input { appearance: none; width: 138px; height: 14px; background: linear-gradient(90deg, #363c52 50%, #cdd1da 50%) center / 100% 1px no-repeat; }
.views input::-webkit-slider-thumb { appearance: none; width: 12px; height: 12px; border: 1px solid #4d5467; border-radius: 50%; background: #fff; }

.ime { position: absolute; right: 38px; bottom: 104px; display: flex; align-items: center; gap: 10px; width: 138px; height: 26px; padding-left: 22px; border: 1px solid #b3c9e8; border-radius: 2px; background: #fff; color: #0a6fd8; font-size: 15px; }
.slogo { position: absolute; left: -17px; top: -5px; }
.meter { position: absolute; right: 0; bottom: 201px; display: flex; flex-direction: column; gap: 1px; width: 10px; padding: 7px 2px 6px 4px; border: 1px solid #343842; border-right: 0; border-radius: 4px 0 0 4px; background: #555b68; }
.meter i { height: 1px; }
.brand { position: absolute; right: 11px; bottom: 7px; display: flex; align-items: flex-start; gap: 2px; opacity: .8; pointer-events: none; }
.brand div { display: flex; flex-direction: column; }
.brand strong { color: #4a8fd4; font-size: 21px; line-height: 24px; }
.brand span { color: #4fbf6f; font: 700 16px/20px "Liberation Sans", sans-serif; }
</style>
